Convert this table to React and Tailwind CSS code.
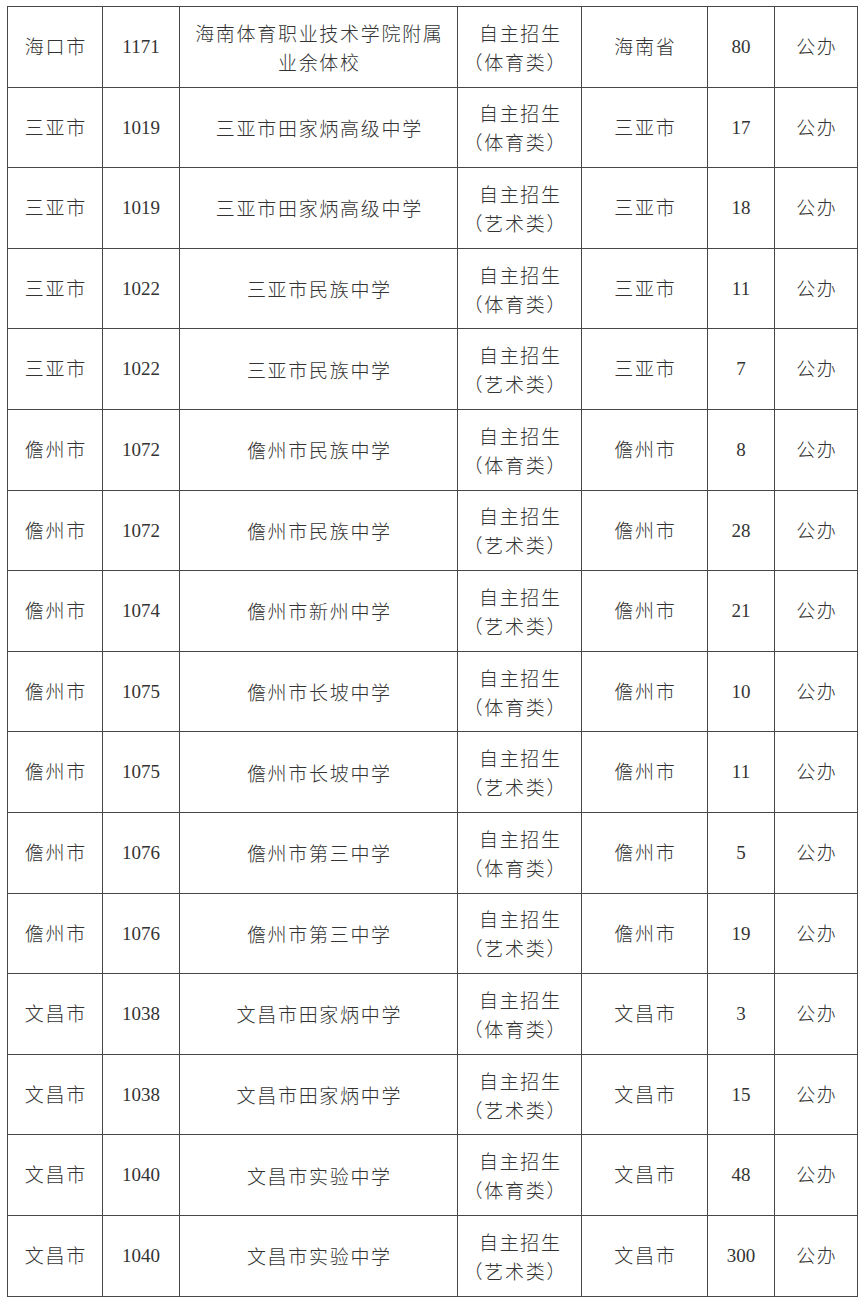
const rows = [
  ["海口市", "1171", "海南体育职业技术学院附属|业余体校", "体育类", "海南省", "80"],
  ["三亚市", "1019", "三亚市田家炳高级中学", "体育类", "三亚市", "17"],
  ["三亚市", "1019", "三亚市田家炳高级中学", "艺术类", "三亚市", "18"],
  ["三亚市", "1022", "三亚市民族中学", "体育类", "三亚市", "11"],
  ["三亚市", "1022", "三亚市民族中学", "艺术类", "三亚市", "7"],
  ["儋州市", "1072", "儋州市民族中学", "体育类", "儋州市", "8"],
  ["儋州市", "1072", "儋州市民族中学", "艺术类", "儋州市", "28"],
  ["儋州市", "1074", "儋州市新州中学", "艺术类", "儋州市", "21"],
  ["儋州市", "1075", "儋州市长坡中学", "体育类", "儋州市", "10"],
  ["儋州市", "1075", "儋州市长坡中学", "艺术类", "儋州市", "11"],
  ["儋州市", "1076", "儋州市第三中学", "体育类", "儋州市", "5"],
  ["儋州市", "1076", "儋州市第三中学", "艺术类", "儋州市", "19"],
  ["文昌市", "1038", "文昌市田家炳中学", "体育类", "文昌市", "3"],
  ["文昌市", "1038", "文昌市田家炳中学", "艺术类", "文昌市", "15"],
  ["文昌市", "1040", "文昌市实验中学", "体育类", "文昌市", "48"],
  ["文昌市", "1040", "文昌市实验中学", "艺术类", "文昌市", "300"],
];

const cjk = "font-['Noto_Sans_CJK_SC',sans-serif] tracking-[1.7px] pl-[1.7px]";
const num = "font-['Liberation_Serif',serif]";
const cell = "border-[1.5px] border-[#474747] text-center align-middle p-0";

export default function App() {
  return (
    <div className="bg-white w-[864px] h-[1305px] pt-[6px] pl-[7px] text-[#333] text-[19px] font-light">
      <table className="table-fixed border-collapse w-[850px]">
        <colgroup>
          <col className="w-[95px]" />
          <col className="w-[77px]" />
          <col className="w-[278px]" />
          <col className="w-[124px]" />
          <col className="w-[126px]" />
          <col className="w-[67px]" />
          <col className="w-[83px]" />
        </colgroup>
        <tbody>
          {rows.map((r, i) => (
            <tr key={i} className="h-[80.6px]">
              <td className={cell}><span className={cjk}>{r[0]}</span></td>
              <td className={cell}><span className={num}>{r[1]}</span></td>
              <td className={cell}>
                <div className={cjk + " leading-[29px]"}>
                  {r[2].split("|").map((t, k) => <div key={k}>{t}</div>)}
                </div>
              </td>
              <td className={cell}>
                <div className={cjk + " leading-[29px]"}>
                  <div>自主招生</div>
                  <div className="-ml-[10px]">（{r[3]}）</div>
                </div>
              </td>
              <td className={cell}><span className={cjk}>{r[4]}</span></td>
              <td className={cell}><span className={num}>{r[5]}</span></td>
              <td className={cell}><span className={cjk}>公办</span></td>
            </tr>
          ))}
        </tbody>
      </table>
    </div>
  );
}
